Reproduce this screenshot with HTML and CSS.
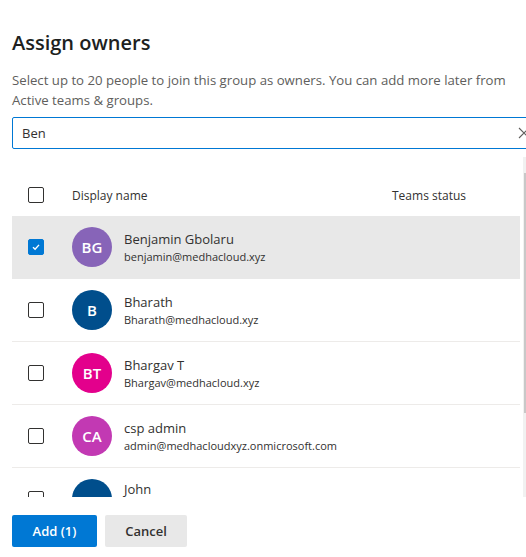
FILE: index.html
```html
<!DOCTYPE html>
<html>
<head>
    <title>Assign owners</title>
    <link rel="stylesheet" href="styles.css">
</head>
<body>
    <div class="panel">
        <h1 class="title">Assign owners</h1>
        <p class="desc">Select up to 20 people to join this group as owners. You can add more later from Active teams &amp; groups.</p>

        <div class="search">
            <span class="search-text">Ben</span>
            <svg class="clear" width="12" height="12" viewBox="0 0 12 12">
                <path d="M1 1 L11 11 M11 1 L1 11" stroke="#605e5c" stroke-width="1.1" fill="none"/>
            </svg>
        </div>

        <div class="list-wrap">
            <div class="list">
                <div class="head">
                    <span class="check"></span>
                    <span class="col-name">Display name</span>
                    <span class="col-status">Teams status</span>
                </div>

                <div class="row selected">
                    <span class="check checked">
                        <svg width="10" height="10" viewBox="0 0 10 10"><path d="M2 5.2 L4.1 7.2 L8 2.9" stroke="#fff" stroke-width="1.4" fill="none"/></svg>
                    </span>
                    <span class="avatar purple">BG</span>
                    <div class="person">
                        <div class="name">Benjamin Gbolaru</div>
                        <div class="mail">benjamin@medhacloud.xyz</div>
                    </div>
                </div>

                <div class="row">
                    <span class="check"></span>
                    <span class="avatar blue">B</span>
                    <div class="person">
                        <div class="name">Bharath</div>
                        <div class="mail">Bharath@medhacloud.xyz</div>
                    </div>
                </div>

                <div class="row">
                    <span class="check"></span>
                    <span class="avatar pink">BT</span>
                    <div class="person">
                        <div class="name">Bhargav T</div>
                        <div class="mail">Bhargav@medhacloud.xyz</div>
                    </div>
                </div>

                <div class="row">
                    <span class="check"></span>
                    <span class="avatar magenta">CA</span>
                    <div class="person">
                        <div class="name">csp admin</div>
                        <div class="mail">admin@medhacloudxyz.onmicrosoft.com</div>
                    </div>
                </div>

                <div class="row last">
                    <span class="check"></span>
                    <span class="avatar blue"></span>
                    <div class="person">
                        <div class="name">John</div>
                    </div>
                </div>
            </div>
            <div class="scrollbar"><div class="thumb"></div></div>
        </div>

        <div class="footer">
            <button class="btn primary">Add (1)</button>
            <button class="btn">Cancel</button>
        </div>
    </div>
</body>
</html>
```

FILE: styles.css
```css
body {
    margin: 0;
    font-family: "Segoe UI", "Open Sans", sans-serif;
    color: #323130;
    background-color: #fff;
    overflow: hidden;
}

.panel {
    width: 526px;
    height: 557px;
    padding-left: 12px;
    box-sizing: border-box;
    overflow: hidden;
}

.title {
    margin: 0;
    padding-top: 29px;
    font-size: 20px;
    line-height: 28px;
    font-weight: 600;
    color: #201f1e;
}

.desc {
    margin: 13px 0 0 0;
    font-size: 13.2px;
    line-height: 20px;
    color: #605e5c;
    width: 510px;
}

.search {
    margin-top: 7px;
    width: 530px;
    height: 32px;
    box-sizing: border-box;
    border: 1px solid #0078d4;
    border-radius: 2px;
    display: flex;
    align-items: center;
    padding-left: 9px;
}

.search-text {
    font-size: 13px;
    flex: 1;
}

.clear {
    margin-right: 11px;
}

.list-wrap {
    margin-top: 8px;
    height: 340px;
    display: flex;
    overflow: hidden;
}

.list {
    width: 508px;
}

.scrollbar {
    margin-left: 3px;
    width: 3px;
    background-color: #f1f1f1;
}

.thumb {
    margin-top: 16px;
    margin-left: 1px;
    width: 2px;
    height: 240px;
    background-color: #c8c8c8;
}

.head {
    margin-top: 17px;
    height: 42px;
    display: flex;
    align-items: center;
    padding-left: 16px;
    font-size: 12px;
}

.col-name {
    margin-left: 28px;
    width: 320px;
}

.check {
    width: 16px;
    height: 16px;
    box-sizing: border-box;
    border: 1px solid #323130;
    border-radius: 2px;
    display: flex;
    align-items: center;
    justify-content: center;
    flex-shrink: 0;
}

.check.checked {
    background-color: #0078d4;
    border-color: #0078d4;
}

.row {
    height: 63px;
    box-sizing: border-box;
    border-bottom: 1px solid #edebe9;
    display: flex;
    align-items: center;
    padding-left: 16px;
}

.row.selected {
    background-color: #e8e8e8;
    border-bottom-color: #e8e8e8;
}

.row.last .person {
    margin-top: -20px;
}

.avatar {
    margin-left: 28px;
    width: 40px;
    height: 40px;
    border-radius: 50%;
    display: flex;
    align-items: center;
    justify-content: center;
    color: #fff;
    font-size: 15px;
    font-weight: 600;
    flex-shrink: 0;
}

.purple { background-color: #8764b8; }
.blue { background-color: #004e8c; }
.pink { background-color: #e3008c; }
.magenta { background-color: #c239b3; }

.person {
    margin-left: 12px;
    margin-top: 0;
}

.name {
    font-size: 13px;
    line-height: 19px;
}

.mail {
    font-size: 11px;
    line-height: 16px;
}

.footer {
    padding-top: 18px;
    display: flex;
    gap: 8px;
}

.btn {
    height: 32px;
    width: 82px;
    border: none;
    border-radius: 2px;
    background-color: #e8e8e8;
    color: #323130;
    font-family: inherit;
    font-size: 13px;
    font-weight: 600;
    padding: 0;
}

.btn.primary {
    width: 85px;
    background-color: #0078d4;
    color: #fff;
}
```
